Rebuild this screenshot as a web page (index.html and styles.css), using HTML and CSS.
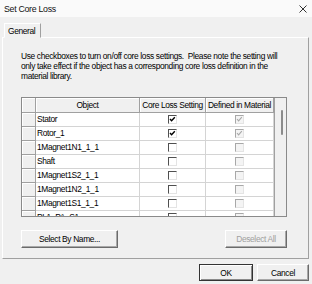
FILE: index.html
```html
<!DOCTYPE html>
<html lang="en">
<head>
    <meta charset="UTF-8">
    <title>Set Core Loss</title>
    <link rel="stylesheet" href="styles.css">
</head>
<body>

<div class="window">
    <div class="titlebar">
        <span class="title">Set Core Loss</span>
        <svg class="close" width="8" height="8" viewBox="0 0 8 8">
            <path d="M0.5 0.5 L7.5 7.5 M7.5 0.5 L0.5 7.5" stroke="#333" stroke-width="1" fill="none"/>
        </svg>
    </div>

    <div class="tabs">
        <div class="tab">General</div>
    </div>

    <div class="panel">
        <p class="note">
            Use checkboxes to turn on/off core loss settings.&nbsp; Please note the setting will<br>
            only take effect if the object has a corresponding core loss definition in the<br>
            material library.
        </p>

        <div class="grid">
            <div class="cols">
                <div class="row head">
                    <div class="rh"></div>
                    <div class="hc">Object</div>
                    <div class="hc">Core Loss Setting</div>
                    <div class="hc">Defined in Material</div>
                </div>
                <div class="rows">
                    <div class="row">
                        <div class="rh"></div>
                        <div class="name">Stator</div>
                        <div class="c"><span class="cb"><svg width="7" height="7" viewBox="0 0 7 7"><path d="M1 3 L2.6 4.8 L5.8 1.2" stroke="#000" stroke-width="1.4" fill="none"/></svg></span></div>
                        <div class="c"><span class="cb off"><svg width="7" height="7" viewBox="0 0 7 7"><path d="M1 3 L2.6 4.8 L5.8 1.2" stroke="#a8a8a8" stroke-width="1.1" fill="none"/></svg></span></div>
                    </div>
                    <div class="row">
                        <div class="rh"></div>
                        <div class="name">Rotor_1</div>
                        <div class="c"><span class="cb"><svg width="7" height="7" viewBox="0 0 7 7"><path d="M1 3 L2.6 4.8 L5.8 1.2" stroke="#000" stroke-width="1.4" fill="none"/></svg></span></div>
                        <div class="c"><span class="cb off"><svg width="7" height="7" viewBox="0 0 7 7"><path d="M1 3 L2.6 4.8 L5.8 1.2" stroke="#a8a8a8" stroke-width="1.1" fill="none"/></svg></span></div>
                    </div>
                    <div class="row">
                        <div class="rh"></div>
                        <div class="name">1Magnet1N1_1_1</div>
                        <div class="c"><span class="cb"></span></div>
                        <div class="c"><span class="cb off"></span></div>
                    </div>
                    <div class="row">
                        <div class="rh"></div>
                        <div class="name">Shaft</div>
                        <div class="c"><span class="cb"></span></div>
                        <div class="c"><span class="cb off"></span></div>
                    </div>
                    <div class="row">
                        <div class="rh"></div>
                        <div class="name">1Magnet1S2_1_1</div>
                        <div class="c"><span class="cb"></span></div>
                        <div class="c"><span class="cb off"></span></div>
                    </div>
                    <div class="row">
                        <div class="rh"></div>
                        <div class="name">1Magnet1N2_1_1</div>
                        <div class="c"><span class="cb"></span></div>
                        <div class="c"><span class="cb off"></span></div>
                    </div>
                    <div class="row">
                        <div class="rh"></div>
                        <div class="name">1Magnet1S1_1_1</div>
                        <div class="c"><span class="cb"></span></div>
                        <div class="c"><span class="cb off"></span></div>
                    </div>
                    <div class="row">
                        <div class="rh"></div>
                        <div class="name">PL1_PA_S1</div>
                        <div class="c"><span class="cb"></span></div>
                        <div class="c"><span class="cb off"></span></div>
                    </div>
                </div>
            </div>
            <div class="vscroll">
                <div class="thumb"></div>
            </div>
        </div>

        <div class="actions">
            <button class="btn wide">Select By Name...</button>
            <button class="btn mid" disabled>Deselect All</button>
        </div>
    </div>

    <div class="footer">
        <button class="btn ok">OK</button>
        <button class="btn cancel">Cancel</button>
    </div>
</div>

</body>
</html>
```

FILE: styles.css
```css
body {
    margin: 0;
    background: #f0f0f0;
    font-family: "Liberation Sans", Arial, sans-serif;
    font-size: 8.4px;
    letter-spacing: -0.35px;
    color: #000;
}
.window {
    width: 312px;
    height: 284px;
    display: flex;
    flex-direction: column;
}
.titlebar {
    height: 17px;
    background: #fafafa;
    display: flex;
    align-items: center;
    justify-content: space-between;
    padding: 0 5px 0 4px;
    box-sizing: border-box;
    font-size: 8.8px;
    letter-spacing: -0.3px;
    color: #111;
}
.tabs {
    height: 20px;
    padding-left: 4px;
    display: flex;
    align-items: flex-end;
}
.tab {
    height: 15px;
    line-height: 14px;
    margin-bottom: -1px;
    padding: 0 5px 0 3px;
    box-sizing: border-box;
    border: 1px solid;
    border-color: #fff #a0a0a0 #f0f0f0 #fff;
    background: #f0f0f0;
    position: relative;
    z-index: 1;
}
.panel {
    height: 222px;
    margin: 0 3px 0 2px;
    box-sizing: border-box;
    border: 1px solid;
    border-color: #fff #a0a0a0 #a0a0a0 #fff;
    padding: 13px 0 0 18px;
    display: flex;
    flex-direction: column;
}
.note {
    margin: 0;
    line-height: 10px;
    white-space: nowrap;
}
.grid {
    margin-top: 16px;
    width: 266px;
    height: 120px;
    box-sizing: border-box;
    border: 1px solid #8a8a8a;
    display: flex;
}
.cols {
    width: 252px;
    display: flex;
    flex-direction: column;
    overflow: hidden;
}
.row {
    display: grid;
    grid-template-columns: 14px 104px 66px 68px;
    height: 14px;
    flex-shrink: 0;
}
.row.head {
    height: 15px;
}
.rows {
    background: #fff;
    overflow: hidden;
    flex: 1;
}
.rh, .hc {
    background: #f0f0f0;
    border-right: 1px solid #a0a0a0;
    border-bottom: 1px solid #a0a0a0;
    box-shadow: inset 1px 1px #fff;
    box-sizing: border-box;
}
.hc {
    text-align: center;
    line-height: 14px;
    white-space: nowrap;
    overflow: hidden;
}
.name, .c {
    border-right: 1px solid #d4d4d4;
    border-bottom: 1px solid #d4d4d4;
    box-sizing: border-box;
}
.name {
    padding-left: 1px;
    line-height: 13px;
    white-space: nowrap;
}
.c {
    display: flex;
    align-items: center;
    justify-content: center;
}
.cb {
    width: 9px;
    height: 9px;
    box-sizing: border-box;
    border: 1px solid;
    border-color: #505050 #e4e4e4 #e4e4e4 #505050;
    background: #fff;
    display: flex;
    align-items: center;
    justify-content: center;
}
.cb.off {
    border-color: #a8a8a8 #e4e4e4 #e4e4e4 #a8a8a8;
    background: #f4f4f4;
}
.vscroll {
    flex: 1;
    background: #f0f0f0;
    border-left: 1px solid #a0a0a0;
    padding: 12px 0 0 6px;
}
.thumb {
    width: 2px;
    height: 25px;
    background: #8b8b8b;
    border-radius: 1px;
}
.actions {
    margin-top: 13px;
    width: 266px;
    display: flex;
    justify-content: space-between;
}
.btn {
    height: 18px;
    padding: 0;
    font-family: inherit;
    font-size: 8.4px;
    letter-spacing: -0.35px;
    color: #000;
    background: #f0f0f0;
    border: 1px solid;
    border-color: #fff #6b6b6b #6b6b6b #fff;
    box-shadow: inset -1px -1px #a8a8a8;
}
.btn.wide {
    width: 97px;
}
.btn.mid {
    width: 62px;
}
.btn:disabled {
    color: #a0a0a0;
}
.footer {
    display: flex;
    justify-content: flex-end;
    gap: 4px;
    padding: 5px 3px 0 0;
}
.btn.ok {
    width: 54px;
    height: 17px;
    border-color: #333;
    box-shadow: inset 1px 1px #fff, inset -1px -1px #8a8a8a;
}
.btn.cancel {
    width: 52px;
    height: 17px;
}
```
